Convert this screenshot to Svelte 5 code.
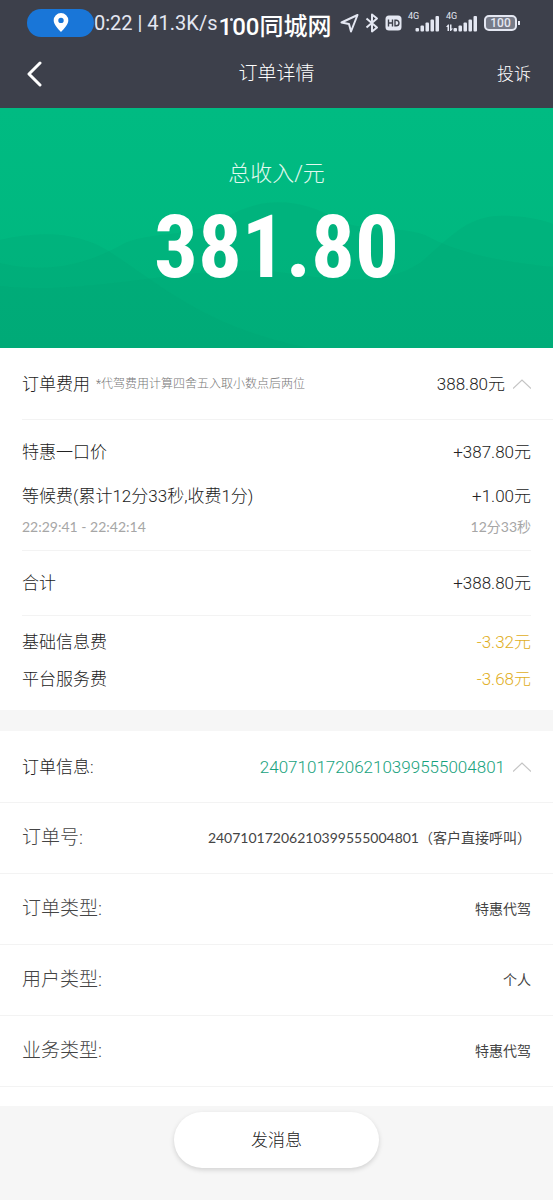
<script>
	const fees = [
		{ name: '基础信息费', amount: '-3.32元' },
		{ name: '平台服务费', amount: '-3.68元' }
	]

	const orderNo = '24071017206210399555004801'

	const details = [
		{ label: '订单号:', value: orderNo + '（客户直接呼叫）' },
		{ label: '订单类型:', value: '特惠代驾' },
		{ label: '用户类型:', value: '个人' },
		{ label: '业务类型:', value: '特惠代驾' }
	]

	let feesOpen = $state(true)
	let infoOpen = $state(true)
</script>

{#snippet chevron(open)}
	<svg class="chevron" class:closed={!open} width="18" height="12" viewBox="0 0 18 12">
		<path d="M0 10.500 9 2l9 8.500" fill="none" stroke="#c4c4c4" stroke-width="1.200" />
	</svg>
{/snippet}

{#snippet signal(data)}
	<span class="signal">
		<small>4G</small>
		<svg width="32" height="17" viewBox="0 0 32 17" fill="#e4e7f2">
			{#if data}
				<path d="M1.500 16v-4H0l2-2.500h1V16zM4 9.500h1.500v4H7L5 16H4z" />
			{/if}
			<rect x="7.500" y="13" width="3.500" height="3.500" rx="1" />
			<rect x="12.500" y="10.500" width="3.500" height="6" rx="1" />
			<rect x="17.500" y="7.500" width="3.500" height="9" rx="1" />
			<rect x="22.500" y="4.500" width="3.500" height="12" rx="1" />
			<rect x="27.500" y="1" width="3.500" height="15.500" rx="1" />
		</svg>
	</span>
{/snippet}

<div class="page">
	<header>
		<div class="status">
			<span class="pill">
				<svg width="16" height="20" viewBox="0 0 16 20">
					<path fill="#fff" fill-rule="evenodd" d="M8 0a7.300 7.300 0 0 0-7.300 7.400C.7 11.500 5 15.700 8 19c3-3.300 7.300-7.500 7.300-11.600A7.300 7.300 0 0 0 8 0zm0 4.700a2.700 2.700 0 1 1 0 5.400 2.700 2.700 0 0 1 0-5.400z" />
				</svg>
			</span>
			<span class="time">0:22 | 41.3K/s</span>
			<span class="site">100同城网<i></i></span>
			<div class="icons">
				<svg width="19" height="20" viewBox="0 0 19 20" fill="none" stroke="#e4e7f2" stroke-width="2" stroke-linejoin="round">
					<path d="M17.500 2 1.500 9.500l7.500 1.500 2 7.500z" />
				</svg>
				<svg width="14" height="20" viewBox="0 0 14 20" fill="none" stroke="#e4e7f2" stroke-width="2" stroke-linejoin="round">
					<path d="m1.500 5.500 10.500 9L7 18.500v-17l5 4-10.500 9" />
				</svg>
				<svg width="17" height="16" viewBox="0 0 17 16">
					<rect x=".5" y=".5" width="16" height="15" rx="3.500" fill="#e4e7f2" />
					<path d="M3.500 4.500v7m4-7v7m-4-3.500h4M10 5.200v5.600h1.200a2.800 2.800 0 0 0 0-5.600z" fill="none" stroke="#3d404b" stroke-width="1.400" />
				</svg>
				{@render signal(false)}
				{@render signal(true)}
				<span class="battery">100</span>
			</div>
		</div>
		<nav>
			<button class="back" aria-label="返回">
				<svg width="16" height="26" viewBox="0 0 16 26">
					<path d="M14 2 3 13l11 11" fill="none" stroke="#fff" stroke-width="3" stroke-linecap="round" stroke-linejoin="round" />
				</svg>
			</button>
			<h1>订单详情</h1>
			<a href="#complain">投诉</a>
		</nav>
	</header>

	<section class="hero">
		<svg class="waves" viewBox="0 0 553 240" preserveAspectRatio="none">
			<path d="M0 132c40-10 80-8 110 12 60 40 100 76 200 96H0z" />
			<path d="M0 155c50 12 90 0 125-20 30-12 60-5 95-22 40-26 80-24 120 0 30 12 55 4 85 14 40 22 90 28 128 32v81H0z" />
			<path d="M0 178c90 10 180-20 270-15 60 8 110 18 150-8 35-30 50-50 90-47 20 1 33 4 43 8v124H0z" />
		</svg>
		<p>总收入/元</p>
		<strong>381.80</strong>
	</section>

	<section class="cost">
		<button class="toggle" onclick={() => (feesOpen = !feesOpen)}>
			<span>订单费用</span>
			<small>*代驾费用计算四舍五入取小数点后两位</small>
			<span class="end">388.80元</span>
			{@render chevron(feesOpen)}
		</button>
		{#if feesOpen}
			<div class="group items">
				<div class="line"><span>特惠一口价</span><span>+387.80元</span></div>
				<div class="line"><span>等候费(累计12分33秒,收费1分)</span><span>+1.00元</span></div>
				<div class="line note"><span>22:29:41 - 22:42:14</span><span>12分33秒</span></div>
			</div>
			<div class="group total">
				<div class="line"><span>合计</span><span>+388.80元</span></div>
			</div>
			<div class="group minus">
				{#each fees as fee}
					<div class="line"><span>{fee.name}</span><span class="yellow">{fee.amount}</span></div>
				{/each}
			</div>
		{/if}
	</section>

	<section class="info">
		<button class="toggle" onclick={() => (infoOpen = !infoOpen)}>
			<span>订单信息:</span>
			<span class="end green">{orderNo}</span>
			{@render chevron(infoOpen)}
		</button>
		{#if infoOpen}
			<dl>
				{#each details as item}
					<div class="detail">
						<dt>{item.label}</dt>
						<dd>{item.value}</dd>
					</div>
				{/each}
			</dl>
		{/if}
	</section>

	<footer>
		<button class="send">发消息</button>
	</footer>
</div>

<style>
	:global(body){
		margin: 0;
		background: #f6f6f6;
	}
	.page{
		display: flex;
		flex-direction: column;
		min-height: 100vh;
		font-family: Roboto, "Noto Sans CJK SC", sans-serif;
		font-size: 17px;
		font-weight: 300;
		line-height: 24px;
		color: #222;
	}
	.page *{
		box-sizing: border-box;
	}
	button{
		font: inherit;
		color: inherit;
		border: 0;
		padding: 0;
		background: none;
		cursor: pointer;
	}
	header{
		background: #3d404b;
		color: #fff;
	}
	.status{
		display: flex;
		align-items: center;
		height: 46px;
		padding: 0 36px 0 27px;
		font-weight: 400;
		color: #e4e7f2;
		white-space: nowrap;
	}
	.pill{
		display: flex;
		align-items: center;
		justify-content: center;
		width: 67px;
		height: 28px;
		border-radius: 14px;
		background: #1976d8;
	}
	.time{
		font-size: 20px;
	}
	.site{
		position: relative;
		margin-left: 1px;
		padding-top: 8px;
		font-size: 24px;
		font-weight: 500;
		color: #fff;
	}
	.site i{
		position: absolute;
		left: 11px;
		top: 11px;
		width: 3px;
		height: 3px;
		border-radius: 50%;
		background: #e4e7f2;
	}
	.icons{
		display: flex;
		align-items: center;
		gap: 6px;
		margin-left: auto;
	}
	.signal{
		position: relative;
		display: flex;
	}
	.signal small{
		position: absolute;
		left: 0;
		top: -3px;
		font-size: 9px;
		line-height: 9px;
	}
	.battery{
		position: relative;
		width: 33px;
		height: 16px;
		border: 2px solid #e4e7f2;
		border-radius: 5px;
		background: #777b88;
		font-size: 12px;
		font-weight: 500;
		line-height: 12px;
		text-align: center;
	}
	.battery::after{
		content: "";
		position: absolute;
		right: -5px;
		top: 4px;
		width: 2px;
		height: 4px;
		background: #e4e7f2;
	}
	nav{
		display: grid;
		grid-template-columns: 1fr auto 1fr;
		align-items: center;
		height: 62px;
		padding: 0 22px 6px;
	}
	.back{
		display: flex;
		justify-self: start;
		padding: 0 4px;
	}
	h1{
		margin: 0;
		font-size: 19px;
		font-weight: inherit;
	}
	nav a{
		justify-self: end;
		color: inherit;
		text-decoration: none;
	}
	.hero{
		position: relative;
		display: flex;
		flex-direction: column;
		align-items: center;
		height: 240px;
		padding-top: 50px;
		background: linear-gradient(#00bb82, #00b67e);
		color: #fff;
	}
	.waves{
		position: absolute;
		inset: 0;
		width: 100%;
		height: 100%;
		fill: #00a572;
		fill-opacity: 0.25;
	}
	.hero p{
		position: relative;
		margin: 0;
		font-size: 22px;
		line-height: 32px;
		color: #e2f9f0;
	}
	.hero strong{
		position: relative;
		font-family: "Roboto Condensed", "Liberation Sans Narrow", "Liberation Sans", sans-serif;
		font-size: 87px;
		font-weight: 700;
		line-height: 114px;
	}
	.cost, .info{
		background: #fff;
	}
	.toggle{
		display: flex;
		align-items: center;
		width: 100%;
		height: 71px;
		padding: 0 22px;
		text-align: left;
	}
	.toggle small{
		margin-left: 6px;
		font-size: 12px;
		color: #777;
	}
	.end{
		margin-left: auto;
	}
	.chevron{
		margin-left: 8px;
	}
	.closed{
		transform: rotate(180deg);
	}
	.group{
		display: flex;
		flex-direction: column;
		margin: 0 22px;
		border-top: 1px solid #f3f3f3;
	}
	.items{
		margin-right: 0;
		padding: 20px 22px 11px 0;
	}
	.items .line + .line{
		margin-top: 20px;
	}
	.items .line + .note{
		margin-top: 7px;
	}
	.total{
		padding: 20px 0;
	}
	.minus{
		gap: 13px;
		padding: 14px 0 19px;
	}
	.line{
		display: flex;
		justify-content: space-between;
	}
	.note, dd{
		font-family: Lato, "Noto Sans CJK SC", sans-serif;
		font-size: 14px;
		font-weight: 400;
	}
	.note{
		color: #a6a6a6;
	}
	.yellow{
		color: #dfae1c;
	}
	.green{
		color: #17a27d;
	}
	.info{
		margin-top: 21px;
		padding-bottom: 19px;
	}
	dl{
		margin: 0;
		border-top: 1px solid #f3f3f3;
	}
	.detail{
		display: flex;
		align-items: center;
		justify-content: space-between;
		height: 71px;
		padding: 0 22px;
		border-bottom: 1px solid #f3f3f3;
	}
	dt{
		font-size: 19px;
		color: #444;
	}
	dd{
		margin: 0;
		color: #444;
	}
	footer{
		display: flex;
		justify-content: center;
		padding: 6px 0 32px;
	}
	.send{
		width: 205px;
		height: 56px;
		border-radius: 28px;
		background: #fff;
		box-shadow: 0 2px 5px rgba(0, 0, 0, 0.15);
	}
</style>
